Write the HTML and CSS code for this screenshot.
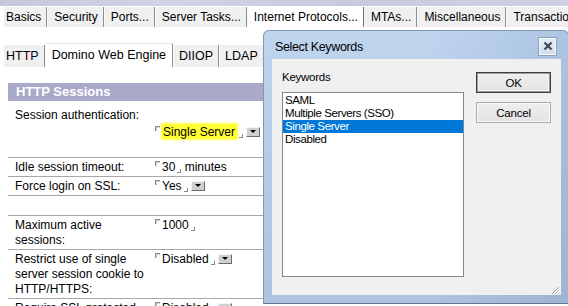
FILE: index.html
```html
<!DOCTYPE html>
<html>
<head>
<meta charset="utf-8">
<link rel="stylesheet" href="styles.css">
</head>
<body>
<div class="top-strip"></div>
<nav class="tabs tabs-main">
  <span class="tab first">Basics</span>
  <span class="tab">Security</span>
  <span class="tab">Ports...</span>
  <span class="tab">Server Tasks...</span>
  <span class="tab sel">Internet Protocols...</span>
  <span class="tab">MTAs...</span>
  <span class="tab">Miscellaneous</span>
  <span class="tab">Transactional Logging</span>
</nav>
<nav class="tabs tabs-sub">
  <span class="tab first">HTTP</span>
  <span class="tab sel">Domino Web Engine</span>
  <span class="tab">DIIOP</span>
  <span class="tab">LDAP</span>
</nav>

<section class="sessions">
  <h2 class="sec-head">HTTP Sessions</h2>
  <div class="row r1">
    <div class="lbl">Session authentication:</div>
    <div class="val"><span class="mk-l"></span><span class="hl">Single Server</span><span class="mk-r"></span><span class="dd"></span></div>
  </div>
  <div class="row">
    <div class="lbl">Idle session timeout:</div>
    <div class="val"><span class="mk-l"></span>30<span class="mk-r"></span> minutes</div>
  </div>
  <div class="row">
    <div class="lbl">Force login on SSL:</div>
    <div class="val"><span class="mk-l"></span>Yes<span class="mk-r"></span><span class="dd"></span></div>
  </div>
  <div class="row empty"><div class="lbl"></div><div class="val"></div></div>
  <div class="row">
    <div class="lbl">Maximum active<br>sessions:</div>
    <div class="val"><span class="mk-l"></span>1000<span class="mk-r"></span></div>
  </div>
  <div class="row">
    <div class="lbl">Restrict use of single<br>server session cookie to<br>HTTP/HTTPS:</div>
    <div class="val"><span class="mk-l"></span>Disabled<span class="mk-r"></span><span class="dd"></span></div>
  </div>
  <div class="row r6">
    <div class="lbl">Require SSL protected</div>
    <div class="val"><span class="mk-l"></span>Disabled<span class="mk-r"></span><span class="dd"></span></div>
    <div class="extra">Maximum</div>
  </div>
</section>

<div class="dialog">
  <div class="dlg-title">
    <span class="dlg-name">Select Keywords</span>
    <span class="dlg-close"><svg width="10" height="10" viewBox="0 0 10 10"><path d="M1.5 1.5 L8.5 8.5 M8.5 1.5 L1.5 8.5" stroke="#3b4a5c" stroke-width="2.2" fill="none"/></svg></span>
  </div>
  <div class="dlg-body">
    <div class="kw-col">
      <div class="kw-label">Keywords</div>
      <ul class="kw-list">
        <li>SAML</li>
        <li>Multiple Servers (SSO)</li>
        <li class="on">Single Server</li>
        <li>Disabled</li>
      </ul>
    </div>
    <div class="btn-col">
      <button class="btn default">OK</button>
      <button class="btn">Cancel</button>
    </div>
    <svg class="grip" width="9" height="9" viewBox="0 0 9 9"><path d="M8 1 L1 8 M8 4 L4 8 M8 7 L7 8" stroke="#a0a0a0" stroke-width="1" fill="none"/><path d="M9 2 L2 9 M9 5 L5 9" stroke="#fff" stroke-width="1" fill="none"/></svg>
  </div>
</div>
</body>
</html>
```

FILE: styles.css
```css
* { box-sizing: border-box; margin: 0; padding: 0; }
html, body { width: 568px; height: 306px; overflow: hidden; background: #fff; }
body {
  font-family: "Liberation Sans", Arial, sans-serif;
  font-size: 12px;
  color: #000;
  position: relative;
}

.top-strip {
  height: 6px;
  background: linear-gradient(90deg, #c6c6dd 0%, #d3d3e7 30%, #c9c9df 60%, #d0d0e4 100%);
}

.tabs { display: flex; white-space: nowrap; }
.tabs-main { margin-top: 1px; height: 20px; padding-left: 4px; align-items: stretch; }
.tab {
  display: flex;
  align-items: center;
  padding: 0 5px 0 6px;
  background: #f0f0f0;
  border-right: 1px solid #8e8e8e;
  border-left: 1px solid #fafafa;
  line-height: 15px;
}
.tab.first { padding-left: 2px; border-left: 0; }
.tab.sel { background: #fff; }
.tabs-main .tab.sel { border-right-color: #6f6f6f; }

.tabs-sub { margin-top: 16px; height: 24px; padding-left: 4px; align-items: flex-end; font-size: 12.5px; }
.tabs-sub .tab { height: 22px; padding: 0 5px; }
.tabs-sub .tab.first { padding-left: 2px; }
.tabs-sub .tab.sel { height: 24px; padding: 0 6px; border-top: 1px solid #e6e6e6; }

.sessions { margin: 16px 0 0 8px; width: 600px; }
.sec-head {
  height: 18px;
  background: #a9a9ca;
  color: #fff;
  font-size: 13px;
  font-weight: bold;
  line-height: 18px;
  padding-left: 8px;
}
.row {
  display: grid;
  grid-template-columns: 147px auto;
  border-bottom: 1px solid #a8a8a8;
  line-height: 15px;
}
.lbl { padding: 2px 0 1px 7px; }
.val { padding: 2px 0 1px 0; white-space: nowrap; }
.r1 { height: 57px; }
.r1 .lbl { padding-top: 7px; }
.r1 .val { padding-top: 24px; }
.empty { height: 20px; }
.r6 { grid-template-columns: 147px 353px auto; border-bottom: 0; }
.extra { padding-top: 7px; font-weight: bold; }

.mk-l {
  display: inline-block;
  width: 5px; height: 5px;
  border-left: 1px solid #8a8a8a;
  border-top: 1px solid #8a8a8a;
  box-shadow: inset 1px 1px 0 #d0d0d0;
  vertical-align: top;
  margin-top: 1px;
  margin-right: 2px;
}
.mk-r {
  display: inline-block;
  width: 4px; height: 4px;
  border-right: 1px solid #8a8a8a;
  border-bottom: 1px solid #8a8a8a;
  vertical-align: -2px;
  margin-left: 2px;
}
.hl {
  background: #ffff33;
  box-shadow: 0 0 2px 1px #ffff55;
  padding: 1px 2px 0 1px;
}
.dd {
  display: inline-block;
  width: 14px; height: 10px;
  margin-left: 3px;
  background: #d0d0d0;
  border: 1px solid;
  border-color: #f4f4f4 #6c6c6c #6c6c6c #f4f4f4;
  vertical-align: -1px;
  position: relative;
}
.dd::after {
  content: "";
  position: absolute;
  left: 3px; top: 2px;
  border-left: 3px solid transparent;
  border-right: 3px solid transparent;
  border-top: 3px solid #000;
}

/* Dialog */
.dialog {
  position: absolute;
  left: 263px; top: 30px;
  width: 306px; height: 274px;
  border: 1px solid #8397b0;
  border-bottom-color: #64768c;
  border-radius: 6px 6px 0 0;
  background:
    linear-gradient(90deg, rgba(60, 95, 150, 0) 55%, rgba(60, 95, 150, 0.14) 100%),
    linear-gradient(180deg, #bfd5ee 0%, #b6cbe4 45%, #aec3dd 100%);
  padding: 0 7px 8px 8px;
  display: flex;
  flex-direction: column;
  font-family: "Liberation Sans", Arial, sans-serif;
}
.dlg-title {
  height: 28px;
  display: flex;
  align-items: center;
  justify-content: space-between;
  padding: 0 4px 0 3px;
}
.dlg-name { font-size: 12.5px; letter-spacing: -0.35px; color: #000; padding-top: 3px; }
.dlg-close {
  width: 19px; height: 19px;
  margin-top: 2px;
  display: flex; align-items: center; justify-content: center;
  background: linear-gradient(#e6eef7, #d3deeb);
  border: 1px solid #8ea3bd;
  box-shadow: inset 0 0 0 1px #f3f7fb;
}
.dlg-body {
  flex: 1;
  background: #f0f0f0;
  display: flex;
  padding: 11px 0 0 10px;
  position: relative;
}
.kw-col { width: 182px; }
.kw-label { font-size: 11.5px; letter-spacing: -0.25px; line-height: 14px; height: 14px; }
.kw-list {
  list-style: none;
  margin-top: 8px;
  height: 185px;
  background: #fff;
  border: 1px solid #828790;
  padding: 0;
  font-size: 11.5px;
  letter-spacing: -0.4px;
  line-height: 13px;
}
.kw-list li { padding-left: 2px; }
.kw-list li:first-child { margin-top: 1px; }
.kw-list li.on { background: #0078d7; color: #fff; }
.btn-col {
  margin-left: 12px;
  padding-top: 2px;
  display: flex;
  flex-direction: column;
  gap: 9px;
}
.btn {
  width: 75px; height: 21px;
  font-family: "Liberation Sans", Arial, sans-serif;
  font-size: 11.5px;
  letter-spacing: -0.2px;
  color: #000;
  background: linear-gradient(#efefef, #e3e3e3);
  border: 1px solid #acacac;
  box-shadow: inset 0 0 0 1px #f7f7f7;
}
.btn.default {
  border: 1px solid #3f3f3f;
  box-shadow: inset 0 0 0 1px #9a9a9a, inset 0 0 0 2px #f4f4f4;
}
.grip { position: absolute; right: 1px; bottom: 0; }
```
